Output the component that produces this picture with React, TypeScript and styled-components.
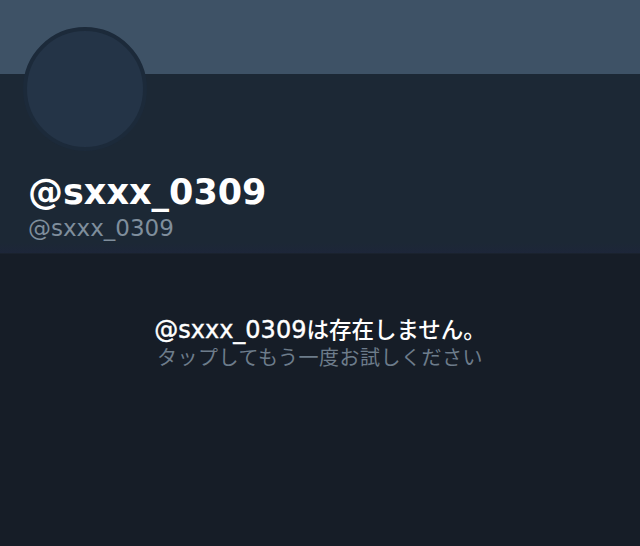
import styled, { createGlobalStyle } from 'styled-components';

const GlobalStyle = createGlobalStyle`
  html, body {
    margin: 0;
    padding: 0;
    background: #161d27;
  }
  body {
    font-family: "Liberation Sans", "Noto Sans CJK JP", sans-serif;
  }
`;

const Page = styled.div`
  width: 640px;
  height: 546px;
  display: flex;
  flex-direction: column;
  overflow: hidden;
  background: #161d27;
`;

const Banner = styled.div`
  height: 74px;
  flex-shrink: 0;
  background: #3e5266;
`;

const ProfileSection = styled.div`
  height: 179px;
  flex-shrink: 0;
  display: flex;
  flex-direction: column;
  padding: 0 0 0 28px;
  background: linear-gradient(to bottom, #1c2835 0%, #1c2835 94%, #1d2639 100%);
  border-bottom: 1px solid #1a222e;
`;

const Avatar = styled.div`
  width: 116px;
  height: 116px;
  margin: -47px 0 0 -5px;
  border-radius: 50%;
  background: #243447;
  border: 4px solid #1c2a3a;
`;

const DisplayName = styled.div`
  margin-top: 21px;
  font-family: "DejaVu Sans", "Noto Sans CJK JP", sans-serif;
  font-size: 35px;
  line-height: 40px;
  font-weight: 700;
  color: #ffffff;
`;

const Handle = styled.div`
  margin-top: 1px;
  font-family: "DejaVu Sans", sans-serif;
  font-size: 23px;
  line-height: 30px;
  color: #7f8e9c;
`;

const MessageArea = styled.div`
  flex: 1;
  display: flex;
  flex-direction: column;
  align-items: center;
  padding-top: 60px;
`;

const MessageTitle = styled.div`
  font-family: "Noto Sans CJK JP", sans-serif;
  font-size: 22.5px;
  line-height: 28px;
  font-weight: 500;
  color: #ffffff;
`;

const TitleHandle = styled.span`
  font-family: "DejaVu Sans", sans-serif;
  font-size: 24px;
  line-height: 28px;
  -webkit-text-stroke: 0.4px #ffffff;
`;

const MessageHint = styled.div`
  margin-top: 1px;
  font-family: "Noto Sans CJK JP", sans-serif;
  font-size: 20px;
  line-height: 24px;
  letter-spacing: 0.5px;
  color: #6d7c8b;
`;

export default function App() {
  return (
    <Page>
      <GlobalStyle />
      <Banner />
      <ProfileSection>
        <Avatar />
        <DisplayName>@sxxx_0309</DisplayName>
        <Handle>@sxxx_0309</Handle>
      </ProfileSection>
      <MessageArea>
        <MessageTitle>
          <TitleHandle>@sxxx_0309</TitleHandle>は存在しません。
        </MessageTitle>
        <MessageHint>タップしてもう一度お試しください</MessageHint>
      </MessageArea>
    </Page>
  );
}
